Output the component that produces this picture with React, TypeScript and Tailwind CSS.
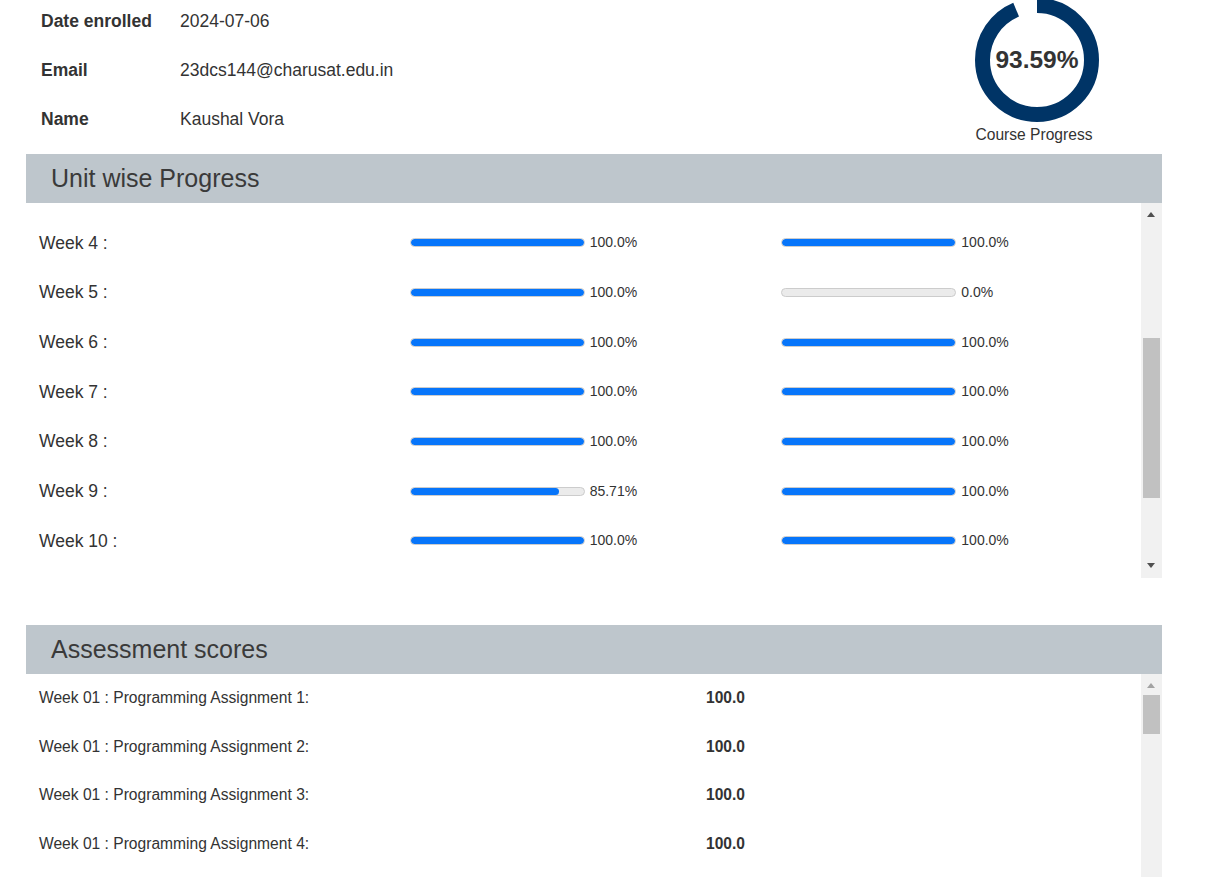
import React from 'react';

const weeks = [
  { label: 'Week 4 :', a: 100, b: 100 },
  { label: 'Week 5 :', a: 100, b: 0 },
  { label: 'Week 6 :', a: 100, b: 100 },
  { label: 'Week 7 :', a: 100, b: 100 },
  { label: 'Week 8 :', a: 100, b: 100 },
  { label: 'Week 9 :', a: 85.71, b: 100 },
  { label: 'Week 10 :', a: 100, b: 100 },
];

const assessments = [1, 2, 3, 4];

function fmt(v: number) {
  return Number.isInteger(v) ? v.toFixed(1) + '%' : v + '%';
}

function Bar({ value }: { value: number }) {
  return (
    <div className="flex items-center pl-[12px]">
      <div className="w-[175px] h-[9px] rounded-full bg-[#ebebeb] border border-[#cccccc] overflow-hidden">
        <div className="h-full bg-[#0775fa] rounded-full" style={{ width: `${value}%` }} />
      </div>
      <span className="ml-[5px] text-[14px] text-[#333]">{fmt(value)}</span>
    </div>
  );
}

function Scrollbar({ thumbTop, thumbHeight, upDisabled }: { thumbTop: number; thumbHeight: number; upDisabled?: boolean }) {
  return (
    <div className="relative w-[21px] h-full bg-[#f1f1f1] shrink-0">
      <div
        className={`absolute left-[6px] top-[9px] w-0 h-0 border-l-[4.5px] border-r-[4.5px] border-b-[5px] border-l-transparent border-r-transparent ${
          upDisabled ? 'border-b-[#a3a3a3]' : 'border-b-[#505050]'
        }`}
      />
      <div className="absolute left-[2px] w-[17px] bg-[#c1c1c1]" style={{ top: thumbTop, height: thumbHeight }} />
    </div>
  );
}

function Donut({ pct }: { pct: number }) {
  const r = 54.5;
  const c = 2 * Math.PI * r;
  return (
    <div className="relative w-[124px] h-[124px]">
      <svg width="124" height="124" viewBox="0 0 124 124">
        <circle
          cx="62"
          cy="62"
          r={r}
          fill="none"
          stroke="#003466"
          strokeWidth="15"
          strokeDasharray={`${(c * pct) / 100} ${c}`}
          transform="rotate(-90 62 62)"
        />
      </svg>
      <div className="absolute inset-0 flex items-center justify-center text-[24.5px] font-bold text-[#333]">
        {pct}%
      </div>
    </div>
  );
}

export default function App() {
  return (
    <div className="bg-white min-h-screen font-['Liberation_Sans',Arial,sans-serif] text-[#333]">
      <div className="w-[1136px] ml-[26px]">
        <div className="flex justify-between items-start">
          <div className="pt-[9px] pl-[15px] flex flex-col gap-[24px] text-[17.5px] leading-[25px]">
            <div className="flex">
              <span className="w-[139px] font-bold">Date enrolled</span>
              <span>2024-07-06</span>
            </div>
            <div className="flex">
              <span className="w-[139px] font-bold">Email</span>
              <span>23dcs144@charusat.edu.in</span>
            </div>
            <div className="flex">
              <span className="w-[139px] font-bold">Name</span>
              <span>Kaushal Vora</span>
            </div>
          </div>
          <div className="flex flex-col items-center mt-[-2px] mr-[63px] pb-[7px]">
            <Donut pct={93.59} />
            <div className="text-[15.6px] leading-[24px] mt-[1px] -ml-[6px]">Course Progress</div>
          </div>
        </div>

        <div className="h-[49px] bg-[#bec6cc] flex items-center pl-[25px] text-[25px] text-[#3a3a3a]">
          Unit wise Progress
        </div>

        <div className="h-[375px] flex">
          <div className="flex-1 pt-[15px]">
            {weeks.map((w) => (
              <div key={w.label} className="grid grid-cols-3 h-[49.7px] items-center">
                <div className="pl-[13px] text-[17.5px]">{w.label}</div>
                <Bar value={w.a} />
                <Bar value={w.b} />
              </div>
            ))}
          </div>
          <div className="relative">
            <Scrollbar thumbTop={135} thumbHeight={160} />
            <div className="absolute left-[6px] bottom-[10px] w-0 h-0 border-l-[4.5px] border-r-[4.5px] border-t-[5px] border-l-transparent border-r-transparent border-t-[#505050]" />
          </div>
        </div>

        <div className="h-[47px]" />

        <div className="h-[49px] bg-[#bec6cc] flex items-center pl-[25px] text-[25px] text-[#3a3a3a]">
          Assessment scores
        </div>

        <div className="h-[203px] flex overflow-hidden">
          <div className="flex-1 pt-[14px] flex flex-col gap-[28.7px] text-[15.6px] leading-[20px]">
            {assessments.map((n) => (
              <div key={n} className="flex">
                <div className="w-[680px] pl-[13px]">Week 01 : Programming Assignment {n}:</div>
                <div className="font-bold">100.0</div>
              </div>
            ))}
          </div>
          <Scrollbar thumbTop={21} thumbHeight={39} upDisabled />
        </div>
      </div>
    </div>
  );
}
